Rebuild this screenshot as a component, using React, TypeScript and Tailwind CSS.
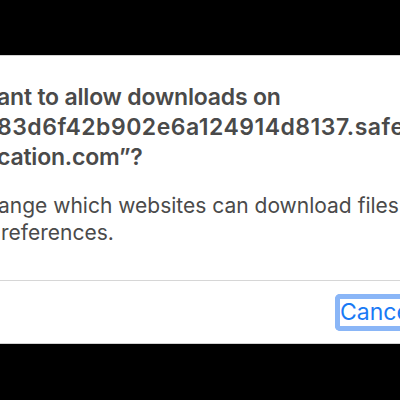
export default function App() {
  return (
    <div className="w-[400px] h-[400px] bg-black flex flex-col overflow-hidden" style={{ fontFamily: 'Inter, "Noto Sans", sans-serif' }}>
      <div className="h-[55px] shrink-0" />
      <div className="h-[289px] shrink-0 bg-white border-y border-[#d2d2d2] flex flex-col overflow-hidden">
        <div className="pt-[26px] text-[23px] leading-[30px] tracking-[-0.2px] font-semibold text-[#4a4a4a] whitespace-nowrap">
          <div className="-ml-[3px]">ant to allow downloads on</div>
          <div className="-ml-[3px] tracking-[0.5px]">83d6f42b902e6a124914d8137.safebrowsing</div>
          <div className="-ml-[3px]">cation.com”?</div>
        </div>
        <div className="mt-[20px] text-[21px] leading-[27px] text-[#4a4a4a] whitespace-nowrap">
          <div className="-ml-[2px]">ange which websites can download files in</div>
          <div className="ml-[1px]">references.</div>
        </div>
        <div className="mt-[34px] border-t border-[#d6d6d6]" />
        <div className="mt-[13px] flex">
          <button className="ml-[335px] h-[37px] pl-0 pr-4 border-[5px] border-r-0 border-[#8ab6f7] rounded-l-[5px] bg-white text-[#1a7af5] text-[23px] leading-[27px] whitespace-nowrap">
            Cancel
          </button>
        </div>
      </div>
    </div>
  );
}
